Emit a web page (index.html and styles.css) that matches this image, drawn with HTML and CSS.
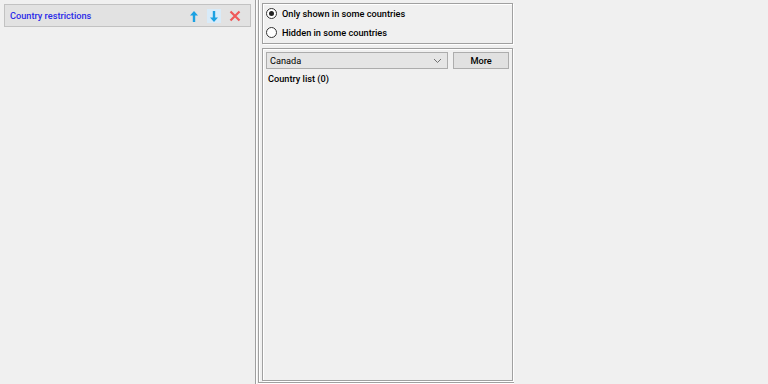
FILE: index.html
```html
<!DOCTYPE html>
<html>
<head>
    <title>Country restrictions</title>
    <link rel="stylesheet" href="styles.css">
</head>
<body>
    <div class="window">
        <div class="left">
            <div class="rule-bar">
                <span class="rule-title">Country restrictions</span>
                <span class="rule-tools">
                    <svg class="tool" width="12" height="14" viewBox="0 0 12 14">
                        <path d="M6 2 L2 6.5 H4.8 V13 H7.2 V6.5 H10 Z" fill="#1ba1e2"/>
                    </svg>
                    <span class="tool tool-hot">
                        <svg width="12" height="14" viewBox="0 0 12 14">
                            <path d="M6 13 L2 8.5 H4.8 V2 H7.2 V8.5 H10 Z" fill="#1ba1e2"/>
                        </svg>
                    </span>
                    <svg class="tool" width="14" height="14" viewBox="0 0 14 14">
                        <path d="M2.5 2.5 L11.5 11.5 M11.5 2.5 L2.5 11.5" stroke="#f05a5a" stroke-width="2.2"/>
                    </svg>
                </span>
            </div>
        </div>
        <div class="right">
            <div class="group modes">
                <label class="radio"><span class="dot on"></span>Only shown in some countries</label>
                <label class="radio"><span class="dot"></span>Hidden in some countries</label>
            </div>
            <div class="group list">
                <div class="pick-row">
                    <div class="combo">
                        <span>Canada</span>
                        <svg width="9" height="6" viewBox="0 0 9 6">
                            <path d="M1 1 L4.5 4.5 L8 1" stroke="#707070" fill="none"/>
                        </svg>
                    </div>
                    <div class="button">More</div>
                </div>
                <div class="list-label">Country list (0)</div>
            </div>
        </div>
    </div>
</body>
</html>
```

FILE: styles.css
```css
* {
    box-sizing: border-box;
}
html, body {
    margin: 0;
}
body {
    background: #f0f0f0;
    font-family: Roboto, "Noto Sans", sans-serif;
    font-size: 9.2px;
    font-weight: 500;
    color: #000;
}
.window {
    display: flex;
    height: 384px;
    width: 768px;
}
.left {
    width: 256px;
    padding: 4px 0 0 4px;
    border-right: 1px solid #a0a0a0;
    box-shadow: 1px 0 0 #fff;
}
.rule-bar {
    display: flex;
    align-items: center;
    width: 247px;
    height: 23px;
    padding: 0 5px;
    background: #e2e2e2;
    border: 1px solid #c2c2c2;
}
.rule-title {
    flex: 1;
    color: #2a2ae8;
}
.rule-tools {
    display: flex;
    align-items: center;
    gap: 7px;
    margin-right: 3px;
    padding-top: 1px;
}
.tool-hot {
    display: flex;
    background: #d8ebf9;
    padding: 0 1px;
}
.right {
    width: 256px;
    height: 383px;
    margin-left: 2px;
    border-left: 1px solid #a0a0a0;
    border-bottom: 1px solid #a0a0a0;
    box-shadow: inset 1px 0 0 #fff, 0 1px 0 #fff;
    padding: 3px 0 0 3px;
    display: flex;
    flex-direction: column;
    gap: 4px;
}
.group {
    width: 251px;
    border: 1px solid #a0a0a0;
    box-shadow: inset 1px 1px 0 #fff, 1px 1px 0 #fff;
}
.modes {
    height: 41px;
    padding: 1px 0 0 3px;
    display: flex;
    flex-direction: column;
    gap: 3px;
}
.radio {
    display: flex;
    align-items: center;
    gap: 5px;
    height: 16px;
}
.dot {
    width: 11px;
    height: 11px;
    border: 1px solid #333;
    border-radius: 50%;
    background: #fff;
    display: flex;
    align-items: center;
    justify-content: center;
}
.dot.on::after {
    content: "";
    width: 5px;
    height: 5px;
    border-radius: 50%;
    background: #222;
}
.list {
    height: 333px;
    padding: 3px 3px 0 3px;
}
.pick-row {
    display: flex;
    gap: 5px;
}
.combo {
    width: 183px;
    height: 17px;
    padding: 0 5px 0 3px;
    background: #e5e5e5;
    border: 1px solid #acacac;
    display: flex;
    align-items: center;
    justify-content: space-between;
    font-weight: 400;
}
.button {
    width: 56px;
    height: 17px;
    background: #e1e1e1;
    border: 1px solid #adadad;
    display: flex;
    align-items: center;
    justify-content: center;
}
.list-label {
    margin-top: 4px;
    padding-left: 2px;
}
```
